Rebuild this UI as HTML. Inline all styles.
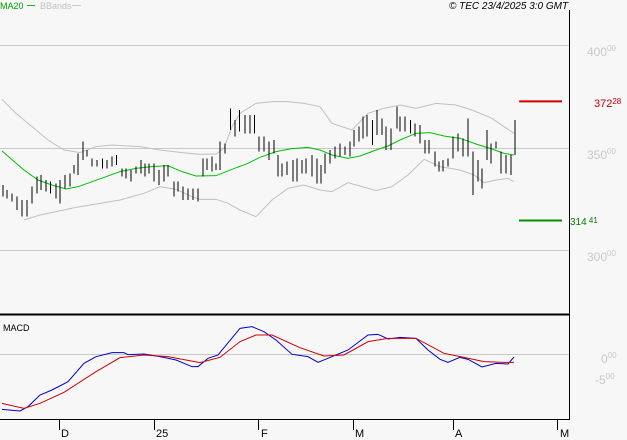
<!DOCTYPE html><html><head><style>body{margin:0;background:#f7f7f7}svg{display:block;font-family:"Liberation Sans",sans-serif}</style></head><body>
<svg width="627" height="440" viewBox="0 0 627 440">
<rect width="627" height="440" fill="#f7f7f7"/>
<g stroke="#c8c8c8" stroke-width="1">
<line x1="0" y1="45.5" x2="569" y2="45.5"/><line x1="0" y1="148.5" x2="569" y2="148.5"/><line x1="0" y1="250.5" x2="569" y2="250.5"/><line x1="0" y1="354.5" x2="569" y2="354.5"/>
</g>
<line x1="569.5" y1="10" x2="569.5" y2="420" stroke="#000"/>
<line x1="0" y1="314.5" x2="569" y2="314.5" stroke="#000" stroke-width="2"/>
<line x1="0" y1="419.5" x2="569" y2="419.5" stroke="#000"/>
<g stroke="#000"><line x1="59.5" y1="419" x2="59.5" y2="430"/><line x1="154.5" y1="419" x2="154.5" y2="430"/><line x1="258.5" y1="419" x2="258.5" y2="430"/><line x1="353.5" y1="419" x2="353.5" y2="430"/><line x1="453.5" y1="419" x2="453.5" y2="430"/><line x1="557.5" y1="419" x2="557.5" y2="430"/></g>
<g font-size="11" fill="#000"><text x="61" y="437">D</text><text x="156" y="437">25</text><text x="261" y="437">F</text><text x="355" y="437">M</text><text x="455" y="437">A</text><text x="560" y="437">M</text></g>
<g transform="scale(0.4 0.33333)" fill="none">
<polyline vector-effect="non-scaling-stroke" stroke="#c0c0c0" points="5,298 40,340 80,380 120,420 160,450 200,458 240,440 280,435 350,440 400,450 450,457 500,463 540,462 560,445 580,380 600,340 640,310 680,305 720,305 760,310 800,320 830,370 880,390 920,340 960,325 1000,315 1040,325 1090,310 1140,315 1180,330 1230,355 1260,380 1285,400"/>
<polyline vector-effect="non-scaling-stroke" stroke="#c0c0c0" points="60,660 100,645 140,635 190,622 250,610 300,600 360,580 400,560 440,568 480,590 500,598 540,598 570,610 600,630 640,650 680,600 720,565 760,555 800,570 830,575 870,548 900,558 940,572 980,560 1020,525 1060,478 1100,500 1150,510 1185,525 1210,548 1240,540 1270,535 1285,545"/>
<polyline vector-effect="non-scaling-stroke" stroke="#00c000" points="5,453 60,510 95,540 130,555 165,567 195,560 230,545 265,530 300,515 340,505 380,500 420,497 455,515 490,528 540,527 580,508 620,490 650,472 690,455 730,446 770,442 800,450 830,465 870,475 900,468 940,450 970,438 1000,420 1040,400 1075,398 1110,408 1150,415 1190,432 1230,447 1260,460 1285,465"/>
<path vector-effect="non-scaling-stroke" shape-rendering="crispEdges" stroke="#000" d="M7 555V590M17 570V595M30 580V605M43 590V630M55 600V650M67 600V650M80 560V610M93 530V580M103 525V570M115 540V575M126 545V580M140 550V595M150 540V610M163 525V565M175 520V560M185 495V520M195 460V525M208 425V480M218 450V470M230 475V500M243 480V500M256 475V505M268 480V505M280 470V500M291 465V495M305 505V530M315 505V535M327 510V545M340 500V520M352 480V520M363 490V530M373 490V520M385 490V545M397 510V555M410 495V545M420 495V530M435 545V590M445 545V575M458 560V600M470 565V600M483 565V600M495 565V605M507 475V530M517 475V510M530 470V515M540 490V510M550 425V510M562 430V460M576 325V390M587 360V410M599 330V395M612 345V400M625 345V400M636 345V400M648 410V455M660 410V455M672 425V480M685 420V460M695 465V530M705 490V530M718 485V525M732 480V545M742 475V545M755 480V520M765 475V520M780 465V530M792 475V550M802 495V550M812 460V520M825 450V490M838 440V475M850 430V470M862 440V465M875 425V470M885 390V440M897 380V425M907 350V415M918 345V410M931 360V435M943 330V405M955 355V405M965 380V450M978 385V450M992 320V385M1000 350V395M1013 350V395M1026 360V400M1038 370V410M1050 375V430M1062 420V460M1073 420V460M1087 455V500M1097 485V515M1107 480V515M1120 475V500M1132 410V475M1145 400V455M1158 415V470M1170 355V470M1182 455V585M1195 480V545M1205 505V565M1217 390V480M1228 430V490M1240 425V445M1252 455V520M1265 465V520M1277 465V525M1287 360V465"/>
<line vector-effect="non-scaling-stroke" x1="1298" y1="304" x2="1405" y2="304" stroke="#d00000" stroke-width="2"/>
</g>
<line x1="519" y1="220.5" x2="562" y2="220.5" stroke="#009000" stroke-width="2"/>
<g transform="translate(0 220) scale(0.4 0.33333)" fill="none">
<polyline vector-effect="non-scaling-stroke" stroke="#0000d0" points="5,568 50,573 70,560 100,525 130,510 170,485 210,430 240,410 280,398 310,398 320,404 360,402 400,410 440,420 480,440 495,440 520,415 545,405 600,325 630,320 660,335 690,360 730,403 770,410 795,427 820,415 870,390 920,345 945,343 970,357 1000,352 1040,355 1070,390 1100,418 1120,427 1150,412 1170,418 1205,441 1240,430 1270,432 1285,411"/>
<polyline vector-effect="non-scaling-stroke" stroke="#d00000" points="5,550 60,565 100,550 160,517 240,455 300,413 360,405 420,410 500,428 550,412 600,365 640,345 680,345 750,383 810,408 860,405 920,365 970,355 1040,355 1110,400 1160,412 1210,425 1260,427 1285,427"/>
</g>
<g fill="#c8c8c8" font-size="12"><text x="587" y="56">400<tspan font-size="8" dy="-5">00</tspan></text><text x="587" y="159">350<tspan font-size="8" dy="-5">00</tspan></text><text x="587" y="261">300<tspan font-size="8" dy="-5">00</tspan></text><text x="601" y="363">0<tspan font-size="8" dy="-5">00</tspan></text><text x="595" y="384">-5<tspan font-size="8" dy="-5">00</tspan></text></g>
<text x="594" y="107" fill="#c00000" font-size="11">372<tspan font-size="8" dy="-3">28</tspan></text>
<text x="570" y="225" fill="#008000" font-size="10">314<tspan font-size="8" dy="-2"> 41</tspan></text>
<text x="0" y="9" font-size="9" fill="#00a000">MA20</text><line x1="27" y1="5.5" x2="35" y2="5.5" stroke="#00c000"/>
<text x="40" y="9" font-size="9" fill="#c0c0c0">BBands</text><line x1="72" y1="5.5" x2="81" y2="5.5" stroke="#c8c8c8"/>
<text x="449" y="9" font-size="10" font-style="italic" fill="#000">© TEC 23/4/2025 3:0 GMT</text>
<text x="3" y="331" font-size="9" fill="#000">MACD</text>
</svg></body></html>
